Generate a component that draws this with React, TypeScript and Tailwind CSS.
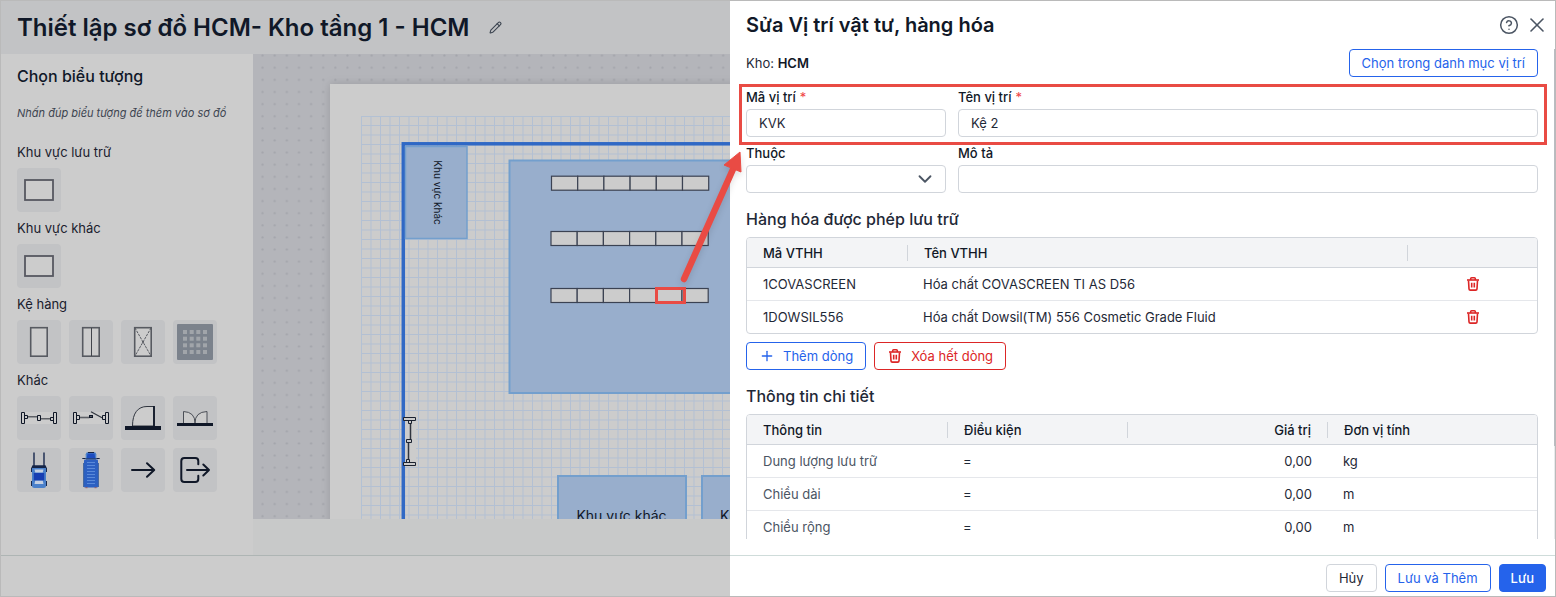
import { ReactNode } from 'react';
import { ChevronDown, CircleHelp, Pencil, Plus, X } from 'lucide-react';
import { clsx } from 'clsx';

const goods = [
  { code: '1COVASCREEN', name: 'Hóa chất COVASCREEN TI AS D56' },
  { code: '1DOWSIL556', name: 'Hóa chất Dowsil(TM) 556 Cosmetic Grade Fluid' },
];

const details = [
  { label: 'Dung lượng lưu trữ', operator: '=', value: '0,00', unit: 'kg' },
  { label: 'Chiều dài', operator: '=', value: '0,00', unit: 'm' },
  { label: 'Chiều rộng', operator: '=', value: '0,00', unit: 'm' },
];

function TrashIcon() {
  return (
    <svg className="h-4 w-4" viewBox="0 0 16 16" fill="none" stroke="currentColor" strokeWidth="1.6">
      <path d="M2 4h12" />
      <path d="M5.7 4V2.6q0-.9.9-.9h2.8q.9 0 .9.9V4" />
      <path d="M3.5 4.5l.5 8.4q.1 1.2 1.3 1.2h5.4q1.2 0 1.3-1.2l.5-8.4" />
      <path d="M6.7 6.8v4.8M9.3 6.8v4.8" />
    </svg>
  );
}

/* Symbol drawings, all on a 44 x 44 tile */

const areaSymbol = <rect x="8" y="12" width="28" height="20" fill="#cccccc" stroke="#575861" strokeWidth="1.8" />;

const shelfSymbol = <rect x="13.7" y="7.7" width="16.5" height="28.5" fill="#cccccc" stroke="#575a61" strokeWidth="1.6" />;

const splitShelfSymbol = (
  <>
    {shelfSymbol}
    <path d="M22.5 8v28" stroke="#41444b" />
  </>
);

const crossShelfSymbol = (
  <>
    {shelfSymbol}
    <path d="M14 8l16 28M30 8L14 36" stroke="#575a61" strokeDasharray="2.5 1" />
    <circle cx="22" cy="22" r="1" fill="#575a61" />
  </>
);

const palletSymbol = (
  <>
    <rect x="4" y="4" width="36" height="36" rx="1" fill="#7b828c" />
    {[10, 16.7, 23.3, 30].map((y) =>
      [10, 16.7, 23.3, 30].map((x) => <rect key={`${x}-${y}`} x={x} y={y} width="4" height="4" fill="#a1a5aa" />)
    )}
  </>
);

const slidingDoorSymbol = (
  <>
    <path d="M4 16h36v12H4z" fill="#cccccc" />
    <path d="M11 20.8h9.5M23.5 22.8h10" stroke="#5d6066" strokeWidth="1.6" />
    <path d="M4.5 16.5h3v11h-3zM36.5 16.5h3v11h-3zM7.5 19.5h3v3h-3zM33.5 21.5h3v3h-3zM20.5 19.5h3v5h-3z" fill="#cccccc" stroke="#101828" />
  </>
);

const openSlidingDoorSymbol = (
  <>
    <path d="M4 16h36v12H4z" fill="#cccccc" />
    <path d="M11 21.5h9.5" stroke="#5d6066" strokeWidth="1.6" />
    <path d="M22 15.8l11 6" stroke="#30353f" strokeWidth="1.2" />
    <path d="M4.5 16.5h3v11h-3zM36.5 16.5h3v11h-3zM7.5 19.5h3v4h-3zM33.5 19.5h3v4h-3z" fill="#cccccc" stroke="#101828" />
    <rect x="20.5" y="19.5" width="3" height="2" fill="#575a61" stroke="#101828" />
  </>
);

const singleDoorSymbol = (
  <>
    <path d="M11.5 30C11.5 17 17 10.5 26 10.5h7V30z" fill="#cccccc" stroke="#30353f" />
    <path d="M33 10v20" stroke="#101828" strokeWidth="1.8" />
    <path d="M4 30h36v4H4z" fill="#101828" />
  </>
);

const doubleDoorSymbol = (
  <>
    <path d="M10.5 27V15.5Q22 16 22 27M34 27V15.5Q22 16 22 27" fill="#cccccc" stroke="#4b4f57" />
    <path d="M4 27h36v3H4z" fill="#101828" />
  </>
);

const forkliftSymbol = (
  <>
    <path d="M17 4.5V18M27 4.5V18" stroke="#17284d" strokeWidth="1.4" />
    <path d="M14 20h2v4h-2zM28 20h2v4h-2zM14 33h2v5h-2zM28 33h2v5h-2z" fill="#17284d" />
    <rect x="15" y="18" width="14" height="22" rx="2.5" fill="#4a80ca" />
    <path d="M15.5 17.2h13l1.3 2.8H14.2z" fill="#142447" />
    <path d="M17.5 21.5h9l-.8 3h-7.4zM18.3 32.5h7.4l.8 3.6h-9z" fill="#c4d0e2" />
    <rect x="16.8" y="25" width="10.4" height="7.4" fill="#173eb2" />
  </>
);

const truckSymbol = (
  <>
    <path d="M18.5 4.3h7q1.5 0 1.8 2v5H16.7v-5q.3-2 1.8-2z" fill="#4a80ca" />
    <path d="M18.5 5.5h7l.8 5h-8.600z" fill="#1c4cc0" />
    <path d="M19 4.5h6M13.3 10.5h3.400M27.300 10.500h3.400M17 11h10" stroke="#142447" />
    <rect x="15" y="11.5" width="14" height="28" rx="1" fill="#2c60c2" />
    <path d="M14.6 15v24M29.4 15v24" stroke="#3a5f9c" />
    <path d="M18 14.500h8M18 17.500h8M18 20.500h8M18 23.500h8M18 26.500h8M18 29.500h8M18 32.500h8M18 35.500h8" stroke="#5a8ada" />
    <path d="M16.5 39.7h2M25.5 39.7h2" stroke="#9a5a5e" />
  </>
);

const arrowSymbol = (
  <path d="M11 22h22M26 15.3l7.2 6.7-7.2 6.7" stroke="#101828" strokeWidth="2" strokeLinecap="round" strokeLinejoin="round" />
);

const exitSymbol = (
  <path
    d="M25.3 16.3V13q0-3-3-3h-11q-3 0-3 3v18q0 3 3 3h11q3 0 3-3v-3.3M14 22h22M30.3 16.5L36 22l-5.7 5.5"
    stroke="#101828"
    strokeWidth="2"
    strokeLinecap="round"
    strokeLinejoin="round"
  />
);

const symbolGroups = [
  { title: 'Khu vực lưu trữ', symbols: [{ name: 'Khu vực lưu trữ', drawing: areaSymbol }] },
  { title: 'Khu vực khác', symbols: [{ name: 'Khu vực khác', drawing: areaSymbol }] },
  {
    title: 'Kệ hàng',
    symbols: [
      { name: 'Kệ đơn', drawing: shelfSymbol },
      { name: 'Kệ đôi', drawing: splitShelfSymbol },
      { name: 'Kệ chéo', drawing: crossShelfSymbol },
      { name: 'Pallet', drawing: palletSymbol },
    ],
  },
  {
    title: 'Khác',
    symbols: [
      { name: 'Cửa trượt', drawing: slidingDoorSymbol },
      { name: 'Cửa trượt mở', drawing: openSlidingDoorSymbol },
      { name: 'Cửa đơn', drawing: singleDoorSymbol },
      { name: 'Cửa đôi', drawing: doubleDoorSymbol },
      { name: 'Xe nâng', drawing: forkliftSymbol },
      { name: 'Xe tải', drawing: truckSymbol },
      { name: 'Mũi tên', drawing: arrowSymbol },
      { name: 'Lối ra', drawing: exitSymbol },
    ],
  },
];

function SymbolPanel() {
  return (
    <aside className="w-[252px] shrink-0 overflow-hidden bg-[#cccccc] px-4 pt-2.5">
      <h2 className="text-base leading-6 font-medium text-[#101828]">Chọn biểu tượng</h2>
      <p className="mt-[15px] mb-[17px] text-[11px] leading-5 text-[#3c4450] italic">Nhấn đúp biểu tượng để thêm vào sơ đồ</p>
      {symbolGroups.map((group) => (
        <section key={group.title} className="mb-1">
          <h3 className="mb-1 text-[13px] leading-6 text-[#1a202c]">{group.title}</h3>
          <div className="flex flex-wrap gap-2">
            {group.symbols.map((symbol) => (
              <button key={symbol.name} type="button" aria-label={symbol.name} className="h-11 w-11 rounded bg-[#c2c3c5]">
                <svg className="h-11 w-11" viewBox="0 0 44 44" fill="none">
                  {symbol.drawing}
                </svg>
              </button>
            ))}
          </div>
        </section>
      ))}
    </aside>
  );
}

function ShelfRow({ x, y }: { x: number; y: number }) {
  return (
    <g fill="#cccccc" stroke="#3b4252" strokeWidth="1.2">
      {[0, 1, 2, 3, 4, 5].map((i) => (
        <rect key={i} x={x + i * 26.2} y={y} width="26.2" height="14" />
      ))}
    </g>
  );
}

function WarehouseMap() {
  return (
    <svg className="min-h-0 w-full flex-1 bg-[#b4b5ba]" fill="none">
      <defs>
        <pattern id="dots" x="3.6" y="-4.4" width="12.12" height="12.12" patternUnits="userSpaceOnUse">
          <circle cx="6" cy="6" r="1.1" fill="#a3a5ab" />
        </pattern>
        <pattern id="grid" x="108" y="71" width="19" height="19" patternUnits="userSpaceOnUse">
          <path d="M.5 0v19M10 0v19M0 .5h19M0 10h19" stroke="#b3c0d3" />
        </pattern>
        <filter id="paperShadow" x="-10%" y="-10%" width="120%" height="120%">
          <feDropShadow dx="0" dy="0" stdDeviation="4" floodColor="#000000" floodOpacity="0.15" />
        </filter>
      </defs>
      <rect width="100%" height="100%" fill="url(#dots)" />
      <rect x="77" y="30" width="1400" height="900" fill="#cccccc" filter="url(#paperShadow)" />
      <rect x="108" y="62" width="1300" height="820" fill="url(#grid)" />
      <path d="M108.5 62v820M108 62.5h1300" stroke="#b3c1d4" />

      <rect x="150.3" y="89.8" width="1000" height="700" stroke="#2f68c5" strokeWidth="3.5" />

      <g fill="#98aecc" stroke="#739fcd" strokeWidth="2">
        <rect x="152.5" y="92.5" width="61.5" height="92" strokeWidth="1.5" />
        <rect x="256.5" y="106.5" width="420" height="232.5" />
        <rect x="305" y="422" width="128" height="90" />
        <rect x="449" y="422" width="128" height="90" />
      </g>

      <g fill="#101828" className="font-['Inter','Noto_Sans',sans-serif]" textAnchor="middle">
        <text x="368.5" y="467" className="text-[14px]">Khu vực khác</text>
        <text x="512" y="467" className="text-[14px]">Khu vực khác</text>
        <text transform="translate(181 138.5) rotate(90)" className="text-[10px]">Khu vực khác</text>
      </g>

      <ShelfRow x={298.5} y={122.2} />
      <ShelfRow x={298} y={177.5} />
      <ShelfRow x={298} y={234.5} />

      {/* sliding door on the left wall */}
      <path d="M152 362h11v51h-11z" fill="#cccccc" />
      <path d="M157.5 369v16M155.5 389v16" stroke="#30353f" strokeWidth="1.5" />
      <path
        d="M150.500 363.500h12v3h-12zM150.500 408.500h12v3h-12zM155.500 366.500h3v3h-3zM153.500 405.500h3v3h-3zM153.500 385.500h5v3h-5z"
        fill="#cccccc"
        stroke="#1b2230"
      />

      <rect x="403.5" y="234.5" width="28" height="14" stroke="#e94b44" strokeWidth="3" />
    </svg>
  );
}

interface FieldProps {
  id: string;
  label: string;
  required?: boolean;
  className?: string;
  children: ReactNode;
}

function Field({ id, label, required, className, children }: FieldProps) {
  return (
    <div className={clsx('flex flex-col gap-1', className)}>
      <label htmlFor={id} className="text-[13px] leading-4 font-medium text-[#111827]">
        {label}
        {required && <span className="ml-1 font-normal text-[#ef4444]">*</span>}
      </label>
      {children}
    </div>
  );
}

const inputClass = 'h-7 w-full rounded border border-[#d1d5db] bg-white px-3 text-[13px] text-[#1f2937] outline-none';

interface ColumnHeadProps {
  children?: ReactNode;
  className?: string;
  last?: boolean;
}

function ColumnHead({ children, className, last }: ColumnHeadProps) {
  return (
    <th scope="col" className="h-[30px] border-b border-[#d1d5db] p-0 font-medium text-[#111827]">
      <div className={clsx('h-4 px-4 leading-4', !last && 'border-r border-[#d1d5db]', className)}>{children}</div>
    </th>
  );
}

function GoodsTable() {
  return (
    <div className="overflow-hidden rounded border border-[#d1d5db]">
      <table className="w-full table-fixed border-separate border-spacing-0 text-left text-[13px] leading-5 text-[#1f2937]">
        <colgroup>
          <col className="w-[161px]" />
          <col />
          <col className="w-[129px]" />
        </colgroup>
        <thead className="bg-[#f3f4f6]">
          <tr>
            <ColumnHead>Mã VTHH</ColumnHead>
            <ColumnHead>Tên VTHH</ColumnHead>
            <ColumnHead last />
          </tr>
        </thead>
        <tbody className="[&_tr:not(:last-child)_td]:border-b">
          {goods.map((item) => (
            <tr key={item.code}>
              <td className="border-[#e5e7eb] px-4 py-1.5">{item.code}</td>
              <td className="border-[#e5e7eb] px-[15px] py-1.5">{item.name}</td>
              <td className="border-[#e5e7eb] py-1.5">
                <button type="button" aria-label={`Xóa ${item.code}`} className="mx-auto block text-[#dc2626]">
                  <TrashIcon />
                </button>
              </td>
            </tr>
          ))}
        </tbody>
      </table>
    </div>
  );
}

function DetailTable() {
  return (
    <div className="overflow-hidden rounded border border-[#d1d5db]">
      <table className="w-full table-fixed border-separate border-spacing-0 text-left text-[13px] leading-5 text-[#1f2937]">
        <colgroup>
          <col className="w-[201px]" />
          <col className="w-[180px]" />
          <col className="w-[200px]" />
          <col />
        </colgroup>
        <thead className="bg-[#f3f4f6]">
          <tr>
            <ColumnHead>Thông tin</ColumnHead>
            <ColumnHead>Điều kiện</ColumnHead>
            <ColumnHead className="text-right">Giá trị</ColumnHead>
            <ColumnHead last>Đơn vị tính</ColumnHead>
          </tr>
        </thead>
        <tbody>
          {details.map((row) => (
            <tr key={row.label}>
              <td className="border-b border-[#e5e7eb] px-4 py-1.5 text-[#4b5563]">{row.label}</td>
              <td className="border-b border-[#e5e7eb] px-[15px] py-1.5">{row.operator}</td>
              <td className="border-b border-[#e5e7eb] px-4 py-1.5 text-right">{row.value}</td>
              <td className="border-b border-[#e5e7eb] px-[15px] py-1.5">{row.unit}</td>
            </tr>
          ))}
        </tbody>
      </table>
    </div>
  );
}

interface ActionButtonProps {
  variant: 'primary' | 'outline' | 'danger' | 'neutral';
  children: ReactNode;
}

function ActionButton({ variant, children }: ActionButtonProps) {
  const variants = {
    primary: 'border-[#2563eb] bg-[#2563eb] px-[11px] text-white font-medium',
    outline: 'border-[#2563eb] bg-white px-3 text-[#2563eb]',
    danger: 'border-[#dc2626] bg-white px-3 text-[#dc2626]',
    neutral: 'border-[#d1d5db] bg-white px-3 text-[#1f2937]',
  };

  return (
    <button
      type="button"
      className={clsx('flex h-7 items-center gap-2 rounded border text-[13px] leading-5 whitespace-nowrap', variants[variant])}
    >
      {children}
    </button>
  );
}

function PositionDrawer() {
  return (
    <div role="dialog" aria-labelledby="drawer-title" className="relative flex w-[825px] shrink-0 flex-col bg-white">
      <header className="flex h-12 shrink-0 items-center justify-between pr-1.5 pl-4">
        <h2 id="drawer-title" className="text-xl font-semibold text-[#111827]">Sửa Vị trí vật tư, hàng hóa</h2>
        <div className="flex items-center gap-1.5 text-[#4b5563]">
          <button type="button" aria-label="Trợ giúp">
            <CircleHelp size={20} strokeWidth={1.8} />
          </button>
          <button type="button" aria-label="Đóng">
            <X size={24} strokeWidth={1.6} />
          </button>
        </div>
      </header>

      <div className="mb-4 flex min-h-0 flex-1 overflow-hidden">
        <div className="min-w-0 flex-1 px-4">
          <div className="flex items-center justify-between">
            <p className="text-[13px] leading-5 text-[#1f2937]">
              Kho: <b className="font-semibold text-[#111827]">HCM</b>
            </p>
            <ActionButton variant="outline">Chọn trong danh mục vị trí</ActionButton>
          </div>

          <div className="relative mt-3 flex gap-3">
            <Field id="code" label="Mã vị trí" required className="w-[200px]">
              <input id="code" className={inputClass} defaultValue="KVK" />
            </Field>
            <Field id="name" label="Tên vị trí" required className="flex-1">
              <input id="name" className={inputClass} defaultValue="Kệ 2" />
            </Field>
            <div className="pointer-events-none absolute -top-[5px] -right-[9px] -bottom-2 -left-[7px] border-3 border-[#e94b44]" />
          </div>

          <div className="mt-2 flex gap-3">
            <Field id="parent" label="Thuộc" className="w-[200px]">
              <div className="relative">
                <select id="parent" className={clsx(inputClass, 'block appearance-none')} />
                <ChevronDown size={22} strokeWidth={2} className="pointer-events-none absolute top-[3px] right-2.5 text-[#4b5563]" />
              </div>
            </Field>
            <Field id="description" label="Mô tả" className="flex-1">
              <input id="description" className={inputClass} />
            </Field>
          </div>

          <h3 className="mt-3.5 mb-1.5 text-base leading-6 font-medium text-[#1f2937]">Hàng hóa được phép lưu trữ</h3>
          <GoodsTable />
          <div className="mt-2 flex gap-2">
            <ActionButton variant="outline">
              <Plus size={16} strokeWidth={2} />
              Thêm dòng
            </ActionButton>
            <ActionButton variant="danger">
              <TrashIcon />
              Xóa hết dòng
            </ActionButton>
          </div>

          <h3 className="mt-3.5 mb-1.5 text-base leading-6 font-medium text-[#1f2937]">Thông tin chi tiết</h3>
          <DetailTable />
        </div>
        <div className="w-px shrink-0 bg-[#e8eaec]">
          <div className="h-[81%] bg-[#b9bcc2]" />
        </div>
      </div>

      <footer className="flex h-[41px] shrink-0 justify-end gap-2 border-t border-[#cfdcda] pt-2 pr-[9px]">
        <ActionButton variant="neutral">Hủy</ActionButton>
        <ActionButton variant="outline">Lưu và Thêm</ActionButton>
        <ActionButton variant="primary">Lưu</ActionButton>
      </footer>

      {/* arrow from the selected shelf cell to the highlighted fields */}
      <svg className="pointer-events-none absolute top-[145px] -left-[60px] h-[150px] w-[80px] drop-shadow-md" viewBox="0 0 80 150">
        <path d="M14 133L64 21" stroke="#e94b44" strokeWidth="6.5" strokeLinecap="round" />
        <path d="M70 6L54 19l17 7z" fill="#e94b44" stroke="#e94b44" />
      </svg>
    </div>
  );
}

export default function App() {
  return (
    <div className="flex h-screen overflow-hidden border border-[#bababa] bg-white font-['Inter','Noto_Sans',sans-serif]">
      <main className="flex min-w-0 flex-1 flex-col bg-[#c8c9c9]">
        <header className="flex h-[53px] shrink-0 items-center gap-5 overflow-hidden bg-[#c2c3c5] px-4">
          <h1 className="text-2xl font-semibold whitespace-nowrap text-[#101828]">Thiết lập sơ đồ HCM- Kho tầng 1 - HCM</h1>
          <button type="button" aria-label="Đổi tên" className="text-[#3c4450]">
            <Pencil size={13} />
          </button>
        </header>
        <div className="flex min-h-0 flex-1">
          <SymbolPanel />
          <div className="flex min-w-0 flex-1 flex-col pb-9">
            <WarehouseMap />
          </div>
        </div>
        <footer className="h-[41px] shrink-0 border-t border-[#aeb5b4] bg-[#cccccc]" />
      </main>
      <PositionDrawer />
    </div>
  );
}
